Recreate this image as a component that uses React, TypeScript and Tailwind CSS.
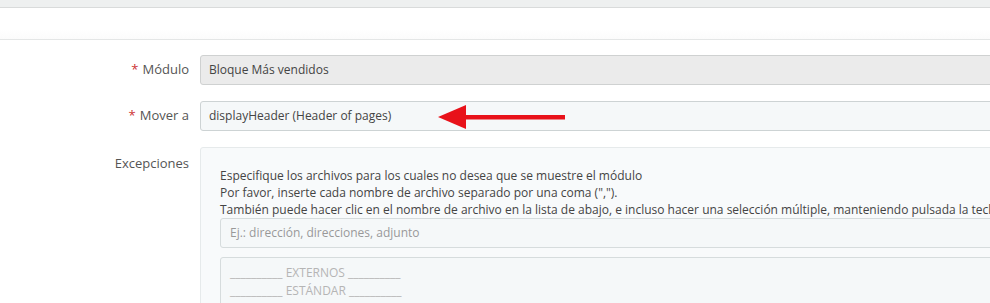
import React from "react";

function Label({ text, required }: { text: string; required?: boolean }) {
  return (
    <div className="w-[200px] shrink-0 pr-[11px] text-right text-[13px] text-[#555]">
      {required && <span className="mr-[4px] text-[#c33]">*</span>}
      {text}
    </div>
  );
}

export default function App() {
  return (
    <div className="h-[303px] w-[990px] overflow-hidden bg-white font-['Open_Sans',sans-serif] text-[12px] text-[#555]">
      {/* top strip */}
      <div className="h-[8px] border-b border-[#d9dbdb] bg-[#eef0f0]" />
      <div className="h-[32px] border-b border-[#e4e6e6] bg-gradient-to-b from-white from-70% to-[#fbfbfb]" />

      <div className="flex flex-col gap-[16px] pt-[15px]">
        {/* Modulo */}
        <div className="flex items-center">
          <Label text="Módulo" required />
          <div className="flex h-[30px] w-[900px] shrink-0 items-center rounded-l-[3px] border border-[#cfd1d1] bg-[#ebebeb] pl-[8px] text-[12px] text-[#444]">
            Bloque Más vendidos
          </div>
        </div>

        {/* Mover a */}
        <div className="flex items-center">
          <Label text="Mover a" required />
          <div className="relative flex h-[30px] w-[900px] shrink-0 items-center rounded-l-[3px] border border-[#cdd3d4] bg-[#f5f8f9] pl-[8px] text-[12px] text-[#444]">
            displayHeader (Header of pages)
            <svg
              className="absolute left-[237px] top-[2px]"
              width="130"
              height="26"
              viewBox="0 0 130 26"
            >
              <polygon points="0,13 28,1 28,25" fill="#e8121a" />
              <rect x="26" y="11" width="101" height="4.5" fill="#e8121a" />
            </svg>
          </div>
        </div>

        {/* Excepciones */}
        <div className="flex items-start">
          <div className="w-[200px] shrink-0 pr-[11px] pt-[7px] text-right text-[13px] text-[#555]">
            Excepciones
          </div>
          <div className="w-[900px] shrink-0 rounded-l-[3px] border border-[#e6eaeb] bg-[#f8fafb] pl-[19px] pt-[19px]">
            <div className="whitespace-nowrap text-[12px] leading-[17px] text-[#444]">
              <p>Especifique los archivos para los cuales no desea que se muestre el módulo</p>
              <p>Por favor, inserte cada nombre de archivo separado por una coma (",").</p>
              <p>
                También puede hacer clic en el nombre de archivo en la lista de abajo, e incluso hacer una selección múltiple, manteniendo pulsada la tecla Ctrl
              </p>
            </div>
            <div className="flex h-[30px] items-center rounded-l-[3px] border border-[#d6dcdd] bg-[#f5f8f9] pl-[9px] text-[12px] text-[#999]">
              Ej.: dirección, direcciones, adjunto
            </div>
            <div className="mt-[9px] h-[60px] rounded-l-[3px] border border-[#d6dcdd] bg-[#f5f8f9] pl-[9px] pt-[6px] text-[12px] leading-[18px] text-[#b5b5b5]">
              <p>__________ EXTERNOS __________</p>
              <p>__________ ESTÁNDAR __________</p>
            </div>
          </div>
        </div>
      </div>
    </div>
  );
}
